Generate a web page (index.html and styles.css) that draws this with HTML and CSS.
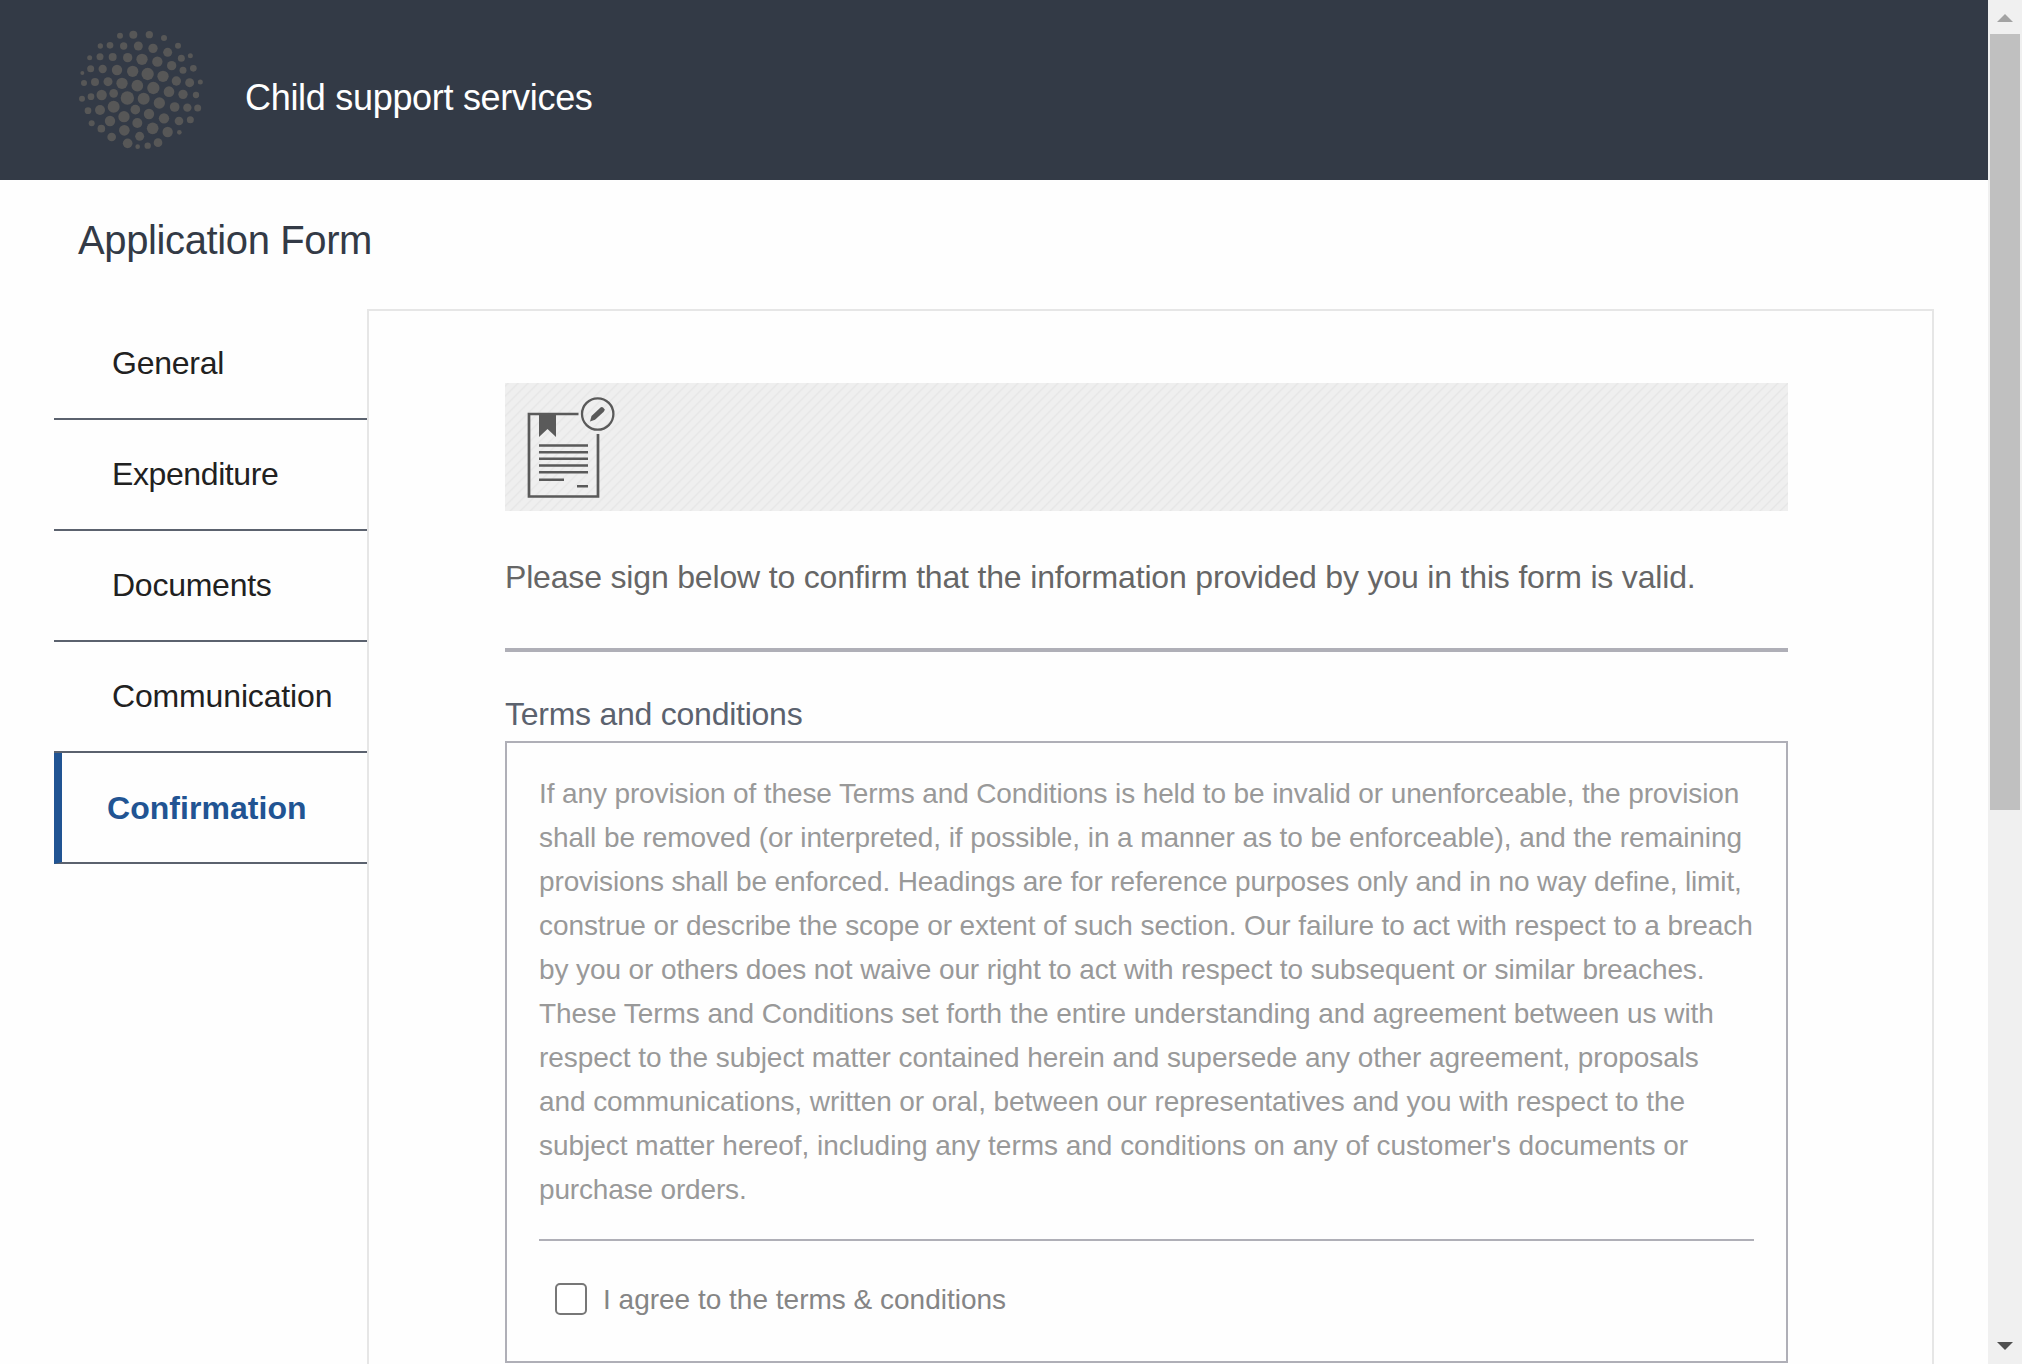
FILE: index.html
```html
<!DOCTYPE html>
<html lang="en">
<head>
<meta charset="utf-8">
<title>Child support services</title>
<link rel="stylesheet" href="styles.css">
</head>
<body>
<div class="window">
  <div class="page">
    <header class="header">
      <svg class="logo" viewBox="0 0 480 450" fill="#575757">
        <circle cx="180" cy="62" r="9"/><circle cx="220" cy="59" r="12"/><circle cx="268" cy="59" r="11"/><circle cx="312" cy="69" r="9"/>
        <circle cx="121" cy="93" r="8"/><circle cx="150" cy="91" r="10"/><circle cx="191" cy="93" r="11"/><circle cx="235" cy="93" r="13.500"/><circle cx="279" cy="100" r="14"/><circle cx="323" cy="112" r="13.500"/><circle cx="354" cy="92" r="9"/>
        <circle cx="89" cy="128" r="7.500"/><circle cx="120" cy="125" r="10.500"/><circle cx="158" cy="126" r="12"/><circle cx="203" cy="128" r="14"/><circle cx="246" cy="133" r="17"/><circle cx="292" cy="140" r="15.500"/><circle cx="335" cy="152" r="14"/><circle cx="364" cy="130" r="10.500"/><circle cx="391" cy="122" r="7.500"/>
        <circle cx="67" cy="174" r="6"/><circle cx="92" cy="161" r="10.500"/><circle cx="128" cy="162" r="12.500"/><circle cx="171" cy="165" r="15.500"/><circle cx="218" cy="169" r="17"/><circle cx="263" cy="177" r="18.500"/><circle cx="309" cy="184" r="17"/><circle cx="369" cy="166" r="10.500"/><circle cx="400" cy="160" r="10"/>
        <circle cx="72" cy="204" r="9"/><circle cx="105" cy="201" r="12"/><circle cx="144" cy="200" r="13.500"/><circle cx="186" cy="205" r="17"/><circle cx="232" cy="212" r="17.500"/><circle cx="280" cy="219" r="18.500"/><circle cx="327" cy="230" r="16"/><circle cx="349" cy="198" r="14"/><circle cx="389" cy="203" r="13.500"/><circle cx="421" cy="201" r="7.500"/>
        <circle cx="66" cy="251" r="9"/><circle cx="93" cy="245" r="10"/><circle cx="125" cy="240" r="15.500"/><circle cx="161" cy="235" r="13"/><circle cx="202" cy="249" r="20"/><circle cx="251" cy="251" r="18"/><circle cx="298" cy="264" r="17"/><circle cx="369" cy="238" r="14"/><circle cx="408" cy="240" r="9.500"/>
        <circle cx="84" cy="287" r="10"/><circle cx="120" cy="285" r="15"/><circle cx="161" cy="275" r="18"/><circle cx="226" cy="284" r="14.500"/><circle cx="267" cy="297" r="15.500"/><circle cx="344" cy="276" r="14.500"/><circle cx="382" cy="278" r="12.500"/><circle cx="413" cy="279" r="10.500"/>
        <circle cx="95" cy="325" r="9"/><circle cx="150" cy="318" r="15.500"/><circle cx="192" cy="305" r="17"/><circle cx="232" cy="324" r="15"/><circle cx="312" cy="310" r="15.500"/><circle cx="357" cy="318" r="13"/><circle cx="391" cy="314" r="10.500"/>
        <circle cx="124" cy="341" r="11.500"/><circle cx="193" cy="346" r="16"/><circle cx="278" cy="340" r="17.500"/><circle cx="323" cy="351" r="15.500"/><circle cx="358" cy="352" r="7"/>
        <circle cx="155" cy="366" r="13"/><circle cx="239" cy="364" r="13.500"/><circle cx="203" cy="385" r="14.500"/><circle cx="233" cy="395" r="7"/><circle cx="263" cy="392" r="9.500"/><circle cx="294" cy="383" r="13"/>
      </svg>
      <div class="brand">Child support services</div>
    </header>
    <h1 class="title">Application Form</h1>
    <div class="form">
      <nav class="tabs">
        <a class="tab">General</a>
        <a class="tab tight">Expenditure</a>
        <a class="tab">Documents</a>
        <a class="tab wide">Communication</a>
        <a class="tab active">Confirmation</a>
      </nav>
      <main class="panel">
        <div class="banner">
          <svg class="doc" viewBox="0 0 100 128" fill="none" stroke="#5a5a5a">
            <path d="M73.500 31H24V113.500H93V51" stroke-width="2.700"/>
            <path d="M34 31H51V54L42.500 46L34 54Z" fill="#5a5a5a" stroke="none"/>
            <path d="M34 62.500H83M34 69.200H83M34 75.800H83M34 82.500H83M34 89.200H83M34 96.800H59M72 103.300H83" stroke-width="2.500"/>
            <circle cx="92.700" cy="31" r="15.700" stroke-width="2.300"/>
            <path d="M85 38.500L86.500 33L95.500 24.500Q97 23.500 98.500 25L99.500 26.300Q100 27.500 98.500 29L90 36.700Z" fill="#5a5a5a" stroke="none"/>
          </svg>
        </div>
        <p class="intro">Please sign below to confirm that the information provided by you in this form is valid.</p>
        <h2 class="heading">Terms and conditions</h2>
        <section class="terms">
          <p class="copy">
            <span class="line">If any provision of these Terms and Conditions is held to be invalid or unenforceable, the provision</span>
            <span class="line">shall be removed (or interpreted, if possible, in a manner as to be enforceable), and the remaining</span>
            <span class="line">provisions shall be enforced. Headings are for reference purposes only and in no way define, limit,</span>
            <span class="line">construe or describe the scope or extent of such section. Our failure to act with respect to a breach</span>
            <span class="line">by you or others does not waive our right to act with respect to subsequent or similar breaches.</span>
            <span class="line">These Terms and Conditions set forth the entire understanding and agreement between us with</span>
            <span class="line">respect to the subject matter contained herein and supersede any other agreement, proposals</span>
            <span class="line">and communications, written or oral, between our representatives and you with respect to the</span>
            <span class="line">subject matter hereof, including any terms and conditions on any of customer's documents or</span>
            <span class="line">purchase orders.</span>
          </p>
          <label class="agree"><input class="check" type="checkbox"><span class="agree-text">I agree to the terms &amp; conditions</span></label>
        </section>
      </main>
    </div>
  </div>
  <div class="scrollbar">
    <svg class="arrow" viewBox="0 0 34 34"><path d="M9 22L17 14L25 22Z" fill="#a3a3a3"/></svg>
    <div class="thumb"></div>
    <svg class="arrow" viewBox="0 0 34 34"><path d="M9 12L17 20L25 12Z" fill="#505050"/></svg>
  </div>
</div>
</body>
</html>
```
FILE: styles.css
```css
* { box-sizing: border-box; }
body { margin: 0; background: #fefefe; font-family: "Liberation Sans", Arial, sans-serif; }
.window { display: flex; height: 1364px; overflow: hidden; }
.page { width: 1988px; height: 1364px; overflow: hidden; }
.header { display: flex; height: 180px; padding: 15px 0 0 60px; background: #333a46; }
.logo { width: 160px; height: 150px; }
.brand { margin: 62px 0 0 25px; font-size: 36px; line-height: 42px; letter-spacing: -0.3px; color: #fff; white-space: nowrap; }
.title { margin: 0; height: 129px; padding: 37px 0 0 78px; font-size: 40px; line-height: 47px; font-weight: 400; letter-spacing: -0.38px; color: #333a46; }
.form { display: flex; padding-left: 54px; }
.tabs { display: flex; flex-direction: column; width: 313px; }
.tab { height: 111px; padding: 36px 0 0 58px; border-bottom: 2px solid #5b626e; font-size: 32px; line-height: 36px; letter-spacing: -0.25px; color: #212121; }
.tab.tight { letter-spacing: -0.4px; }
.tab.wide { letter-spacing: -0.15px; }
.tab.active { border-left: 8px solid #215493; padding: 37px 0 0 45px; font-weight: 700; letter-spacing: 0.05px; color: #215493; }
.panel { width: 1567px; height: 1100px; padding: 72px 144px 0 136px; border: 2px solid #e6e6e6; }
.banner { height: 128px; background: repeating-linear-gradient(-45deg, #efefef 0, #efefef 4.200px, #e6e6e6 5.600px, #efefef 7.070px); }
.doc { display: block; width: 100px; height: 128px; overflow: visible; }
.intro { margin: 0; height: 141px; padding-top: 48px; border-bottom: 4px solid #afafb7; font-size: 32px; line-height: 36px; letter-spacing: -0.175px; color: #666; white-space: nowrap; }
.heading { margin: 0; height: 89px; padding-top: 44px; font-size: 32px; line-height: 36px; font-weight: 400; letter-spacing: -0.25px; color: #5b626e; }
.terms { height: 622px; padding: 29px 32px 0; border: 2px solid #afafb7; }
.copy { margin: 0; height: 469px; border-bottom: 2px solid #afafb7; font-size: 28px; line-height: 44px; color: #999; white-space: nowrap; }
.line { display: block; letter-spacing: -0.08px; }
.line:nth-child(1) { letter-spacing: -0.118px; }
.line:nth-child(3) { letter-spacing: -0.13px; }
.line:nth-child(5) { letter-spacing: -0.1px; }
.line:nth-child(6), .line:nth-child(7) { letter-spacing: -0.049px; }
.line:nth-child(9) { letter-spacing: -0.02px; }
.line:nth-child(10) { letter-spacing: -0.16px; }
.agree { display: flex; align-items: center; gap: 16px; padding: 38px 0 0 16px; font-size: 28px; line-height: 38px; color: #858585; }
.agree-text { padding-top: 2px; }
.check { appearance: none; width: 32px; height: 32px; margin: 0; border: 2px solid #777; border-radius: 5px; background: #fff; }
.scrollbar { display: flex; flex-direction: column; width: 34px; background: #f0f0f0; }
.arrow { display: block; width: 34px; height: 34px; }
.thumb { width: 30px; height: 776px; margin: 0 2px 520px; background: #c0c0c0; }
```
